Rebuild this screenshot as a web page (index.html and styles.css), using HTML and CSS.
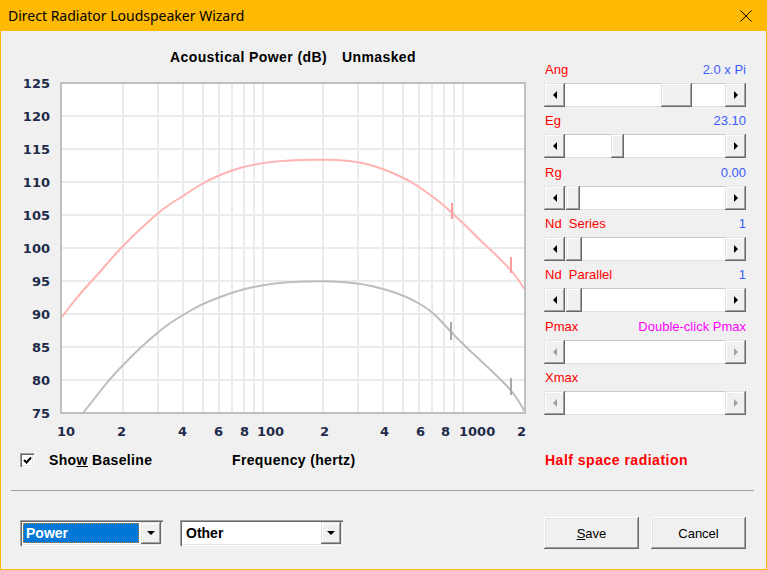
FILE: index.html
```html
<!DOCTYPE html>
<html lang="en">
<head>
    <meta charset="UTF-8">
    <title>Direct Radiator Loudspeaker Wizard</title>
    <link rel="stylesheet" href="styles.css">
</head>
<body>
<div class="window">
    <div class="titlebar">
        <span class="title">Direct Radiator Loudspeaker Wizard</span>
        <svg class="close" width="12" height="12" viewBox="0 0 12 12">
            <path d="M0.5 0.5L11.5 11.5M11.5 0.5L0.5 11.5" stroke="#000" stroke-width="1" fill="none"/>
        </svg>
    </div>

    <div class="client">
        <div class="main">
            <div class="chart">
                <div class="chart-title">Acoustical Power (dB)<span class="gap"></span>Unmasked</div>
                <!-- viewBox matches page coordinates so points can be read straight off the screen -->
                <svg class="plot" width="528" height="372" viewBox="10 72 528 372">
                    <rect x="61" y="83" width="464" height="330" fill="#fff"/>
                    <g stroke="#ebebeb" stroke-width="2" fill="none">
                        <path d="M123 84V412M158 84V412M183 84V412M203 84V412M219 84V412M232 84V412M244 84V412M254 84V412M263 84V412M323 84V412M358 84V412M383 84V412M403 84V412M419 84V412M432 84V412M444 84V412M454 84V412M463 84V412"/>
                        <path d="M62 116H524M62 149H524M62 182H524M62 215H524M62 248H524M62 281H524M62 314H524M62 347H524M62 380H524"/>
                    </g>
                    <path class="curve pink" d="M62,317 L68,309 Q74,301 80.5,293.5 Q87,286 93.5,279 Q100,272 105.5,265.5 Q111,259 116.5,253 Q122,247 128.5,240.5 Q135,234 141,228.5 Q147,223 152.5,218 Q158,213 164,208.5 Q170,204 176.5,200 Q183,196 189,192 Q195,188 201,184.5 Q207,181 213.5,178 Q220,175 226.5,172.5 Q233,170 240,168 Q247,166 255,164.5 Q263,163 271.5,162 Q280,161 290,160.5 Q300,160 311.5,159.75 Q323,159.5 331.5,159.75 Q340,160 349,161 Q358,162 366.5,164 Q375,166 384,169.5 Q393,173 401.5,177 Q410,181 417.5,186 Q425,191 432.5,196.5 Q440,202 446,207.5 Q452,213 459,219.5 Q466,226 473,233 Q480,240 488,247.5 Q496,255 503,262 Q510,269 514,274 Q518,279 521.5,284.5 L525,290"/>
                    <path class="curve grey" d="M83,413 L89,405.5 Q95,398 101.5,389.5 Q108,381 115.5,373 Q123,365 131.5,356.5 Q140,348 148.5,340.5 Q157,333 163.5,328 Q170,323 176.5,319 Q183,315 191.5,310 Q200,305 210,301 Q220,297 228.5,294 Q237,291 245,289 Q253,287 261.5,285.5 Q270,284 280,283 Q290,282 306.5,281.5 Q323,281 334,281.5 Q345,282 355,283.25 Q365,284.5 372.5,286.25 Q380,288 388.5,290.5 Q397,293 405,296.5 Q413,300 419,303.5 Q425,307 429,310 Q433,313 437.5,317.5 Q442,322 446.5,327 Q451,332 458,339 Q465,346 472.5,353 Q480,360 488,367.5 Q496,375 503.5,382.5 Q511,390 514.5,395 Q518,400 521.5,406 L525,412"/>
                    <path class="tick pink" d="M452 203V219M511 257V273"/>
                    <path class="tick grey" d="M451 322V340M511 378V395"/>
                    <rect x="61" y="83" width="464" height="330" fill="none" stroke="#c0c0c0" stroke-width="2"/>

                    <g class="axis" text-anchor="end">
                        <text x="50" y="88">125</text>
                        <text x="50" y="121">120</text>
                        <text x="50" y="154">115</text>
                        <text x="50" y="187">110</text>
                        <text x="50" y="220">105</text>
                        <text x="50" y="253">100</text>
                        <text x="50" y="286">95</text>
                        <text x="50" y="319">90</text>
                        <text x="50" y="352">85</text>
                        <text x="50" y="385">80</text>
                        <text x="50" y="418">75</text>
                    </g>
                    <g class="axis">
                        <text x="57" y="436">10</text>
                        <text x="117" y="436">2</text>
                        <text x="178" y="436">4</text>
                        <text x="214" y="436">6</text>
                        <text x="240" y="436">8</text>
                        <text x="257" y="436">100</text>
                        <text x="320" y="436">2</text>
                        <text x="380" y="436">4</text>
                        <text x="416" y="436">6</text>
                        <text x="441" y="436">8</text>
                        <text x="459" y="436">1000</text>
                        <text x="517" y="436">2</text>
                    </g>
                </svg>
            </div>

            <div class="panel">
                <div class="group">
                    <div class="label-row"><span class="name">Ang</span><span class="value">2.0 x Pi</span></div>
                    <div class="sb">
                        <div class="sb-btn"><i class="arr-l"></i></div>
                        <div class="sb-track"><div class="sb-thumb" style="margin-left:96px;width:31px"></div></div>
                        <div class="sb-btn"><i class="arr-r"></i></div>
                    </div>
                </div>
                <div class="group">
                    <div class="label-row"><span class="name">Eg</span><span class="value">23.10</span></div>
                    <div class="sb">
                        <div class="sb-btn"><i class="arr-l"></i></div>
                        <div class="sb-track"><div class="sb-thumb" style="margin-left:46px;width:13px"></div></div>
                        <div class="sb-btn"><i class="arr-r"></i></div>
                    </div>
                </div>
                <div class="group">
                    <div class="label-row"><span class="name">Rg</span><span class="value">0.00</span></div>
                    <div class="sb">
                        <div class="sb-btn"><i class="arr-l"></i></div>
                        <div class="sb-track"><div class="sb-thumb" style="margin-left:1px;width:14px"></div></div>
                        <div class="sb-btn"><i class="arr-r"></i></div>
                    </div>
                </div>
                <div class="group">
                    <div class="label-row"><span class="name">Nd  Series</span><span class="value">1</span></div>
                    <div class="sb">
                        <div class="sb-btn"><i class="arr-l"></i></div>
                        <div class="sb-track"><div class="sb-thumb" style="margin-left:1px;width:16px"></div></div>
                        <div class="sb-btn"><i class="arr-r"></i></div>
                    </div>
                </div>
                <div class="group">
                    <div class="label-row"><span class="name">Nd  Parallel</span><span class="value">1</span></div>
                    <div class="sb">
                        <div class="sb-btn"><i class="arr-l"></i></div>
                        <div class="sb-track"><div class="sb-thumb" style="margin-left:1px;width:16px"></div></div>
                        <div class="sb-btn"><i class="arr-r"></i></div>
                    </div>
                </div>
                <div class="group">
                    <div class="label-row"><span class="name">Pmax</span><span class="value hint">Double-click Pmax</span></div>
                    <div class="sb disabled">
                        <div class="sb-btn"><i class="arr-l"></i></div>
                        <div class="sb-track"></div>
                        <div class="sb-btn"><i class="arr-r"></i></div>
                    </div>
                </div>
                <div class="group">
                    <div class="label-row"><span class="name">Xmax</span></div>
                    <div class="sb disabled">
                        <div class="sb-btn"><i class="arr-l"></i></div>
                        <div class="sb-track"></div>
                        <div class="sb-btn"><i class="arr-r"></i></div>
                    </div>
                </div>
            </div>
        </div>

        <div class="status">
            <div class="baseline">
                <span class="check">
                    <svg width="9" height="9" viewBox="0 0 9 9"><path d="M1 4L3.5 6.5L8 1.5" stroke="#000" stroke-width="2" fill="none"/></svg>
                </span>
                <span>Sho<u>w</u> Baseline</span>
            </div>
            <div class="freq">Frequency (hertz)</div>
            <div class="half">Half space radiation</div>
        </div>

        <div class="sep"></div>

        <div class="footer">
            <div class="combo power">
                <div class="combo-field selected">Power</div>
                <div class="combo-btn"><i class="arr-d"></i></div>
            </div>
            <div class="combo other">
                <div class="combo-field">Other</div>
                <div class="combo-btn"><i class="arr-d"></i></div>
            </div>
            <button class="btn save"><u>S</u>ave</button>
            <button class="btn cancel">Cancel</button>
        </div>
    </div>
</div>
</body>
</html>
```

FILE: styles.css
```css
body {
    margin: 0;
    background: #f0f0f0;
    font-family: "Liberation Sans", Arial, sans-serif;
    color: #000;
}
.window {
    width: 767px;
    height: 570px;
    box-sizing: border-box;
    border: 1px solid #ffb900;
    border-top: none;
    display: flex;
    flex-direction: column;
    background: #f0f0f0;
}
.titlebar {
    height: 31px;
    flex: none;
    background: #ffb900;
    display: flex;
    align-items: center;
    justify-content: space-between;
    padding: 0 14px 0 7px;
}
.title {
    font-family: "Noto Sans", "Liberation Sans", sans-serif;
    font-size: 14px;
}
.close {
    display: block;
}
.client {
    flex: 1;
}
.main {
    display: flex;
    padding-left: 9px;
}
.chart {
    width: 528px;
}
.chart-title {
    margin-top: 18px;
    height: 16px;
    line-height: 16px;
    padding-left: 160px;
    font-weight: bold;
    font-size: 14px;
    letter-spacing: 0.4px;
    white-space: nowrap;
}
.chart-title .gap {
    display: inline-block;
    width: 15px;
}
.plot {
    display: block;
    margin-top: 7px;
}
.curve {
    fill: none;
    stroke-width: 2;
    stroke-linejoin: round;
}
.curve.pink { stroke: #ffb3b3; }
.curve.grey { stroke: #bdbdbd; }
.tick {
    fill: none;
    stroke-width: 2;
}
.tick.pink { stroke: #ff9d9d; }
.tick.grey { stroke: #a8a8a8; }
.axis text {
    font-family: "DejaVu Sans", Verdana, sans-serif;
    font-weight: bold;
    font-size: 13px;
    fill: #1e2b4a;
}

/* right hand slider panel */
.panel {
    width: 202px;
    margin-left: 6px;
    padding-top: 31px;
}
.group + .group {
    margin-top: 6.35px;
}
.label-row {
    display: flex;
    justify-content: space-between;
    height: 16px;
    line-height: 16px;
    font-size: 13px;
    margin-bottom: 5px;
    padding-left: 1px;
}
.name {
    color: #ff0000;
    white-space: pre;
}
.value {
    color: #3d5cff;
}
.value.hint {
    color: #ff00ff;
}
.sb {
    display: flex;
    height: 24px;
    background: #fff;
    box-shadow: inset 0 1px #c8c8c8, inset 0 -1px #e0e0e0;
}
.sb-btn {
    width: 21px;
    flex: none;
    background: #f0f0f0;
    box-shadow: inset -1px -1px #696969, inset 1px 1px #e3e3e3, inset -2px -2px #a0a0a0, inset 2px 2px #fff;
    display: flex;
    align-items: center;
    justify-content: center;
}
.sb-track {
    flex: 1;
    display: flex;
}
.sb-thumb {
    background: #f0f0f0;
    box-shadow: inset -1px -1px #696969, inset 1px 1px #e3e3e3, inset -2px -2px #a0a0a0, inset 2px 2px #fff;
}
.arr-l, .arr-r, .arr-d {
    display: block;
    width: 0;
    height: 0;
}
.arr-l {
    border-right: 4px solid #000;
    border-top: 4px solid transparent;
    border-bottom: 4px solid transparent;
}
.arr-r {
    border-left: 4px solid #000;
    border-top: 4px solid transparent;
    border-bottom: 4px solid transparent;
}
.arr-d {
    border-top: 4px solid #000;
    border-left: 4px solid transparent;
    border-right: 4px solid transparent;
}
.sb.disabled .arr-l { border-right-color: #a0a0a0; }
.sb.disabled .arr-r { border-left-color: #a0a0a0; }

/* row under the chart */
.status {
    display: flex;
    align-items: center;
    height: 16px;
    margin-top: 8px;
    padding-left: 19px;
    font-size: 14px;
    font-weight: bold;
    letter-spacing: 0.35px;
}
.baseline {
    width: 212px;
    display: flex;
    align-items: center;
}
.check {
    width: 14px;
    height: 14px;
    box-sizing: border-box;
    background: #fff;
    box-shadow: inset 1px 1px #a0a0a0, inset 2px 2px #696969, inset -1px -1px #fff, inset -2px -2px #e3e3e3;
    display: flex;
    align-items: center;
    justify-content: center;
    margin-right: 15px;
}
.check svg {
    display: block;
}
.freq {
    width: 313px;
}
.half {
    color: #ff0000;
    letter-spacing: 0.5px;
}
.sep {
    margin: 22px 12px 0 10px;
    border-top: 1px solid #a0a0a0;
}

/* footer controls */
.footer {
    display: flex;
    align-items: center;
    padding: 26px 0 0 19px;
}
.combo {
    display: flex;
    height: 26px;
    box-sizing: border-box;
    padding: 2px;
    background: #fff;
    box-shadow: inset 1px 1px #a0a0a0, inset 2px 2px #696969, inset -1px -1px #fff, inset -2px -2px #e3e3e3;
}
.combo.power { width: 143px; }
.combo.other { width: 163px; margin-left: 17px; }
.combo-field {
    flex: 1;
    margin: 1px 2px 1px 1px;
    padding-left: 3px;
    font-size: 14px;
    font-weight: bold;
    line-height: 20px;
}
.combo-field.selected {
    background: #0078d7;
    color: #fff;
    outline: 1px dotted #c87a2a;
    outline-offset: -1px;
}
.combo-btn {
    width: 20px;
    background: #f0f0f0;
    box-shadow: inset -1px -1px #696969, inset 1px 1px #e3e3e3, inset -2px -2px #a0a0a0, inset 2px 2px #fff;
    display: flex;
    align-items: center;
    justify-content: center;
}
.btn {
    width: 95px;
    height: 32px;
    border: none;
    background: #f0f0f0;
    box-shadow: inset -1px -1px #696969, inset 1px 1px #fff, inset -2px -2px #a0a0a0, inset 2px 2px #e3e3e3;
    font-family: "Liberation Sans", Arial, sans-serif;
    font-size: 13px;
    color: #000;
    padding: 0;
}
.btn.save { margin-left: 201px; }
.btn.cancel { margin-left: 12px; }
```
